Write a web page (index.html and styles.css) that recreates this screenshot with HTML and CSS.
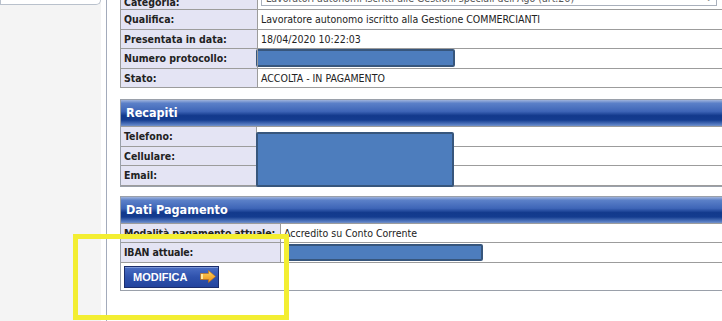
FILE: index.html
```html
<!DOCTYPE html>
<html lang="it">
  <head>
    <meta charset="UTF-8" />
    <meta name="viewport" content="width=device-width, initial-scale=1.0" />
    <title>Dettaglio domanda</title>
    <link rel="stylesheet" href="styles.css">
  </head>
  <body>
    <div class="page">
      <aside class="sidebar">
        <div class="side-box"></div>
      </aside>

      <main class="content">
        <table class="grid details">
          <tr class="select-row">
            <th>Categoria:</th>
            <td>
              <div class="select">
                <span>Lavoratori autonomi iscritti alle Gestioni speciali dell'Ago (art.26)</span>
                <span class="caret">&#8964;</span>
              </div>
            </td>
          </tr>
          <tr>
            <th>Qualifica:</th>
            <td>Lavoratore autonomo iscritto alla Gestione COMMERCIANTI</td>
          </tr>
          <tr>
            <th>Presentata in data:</th>
            <td>18/04/2020 10:22:03</td>
          </tr>
          <tr>
            <th>Numero protocollo:</th>
            <td><span class="redact redact-protocol"></span></td>
          </tr>
          <tr>
            <th>Stato:</th>
            <td>ACCOLTA - IN PAGAMENTO</td>
          </tr>
        </table>

        <section class="panel">
          <h2 class="panel-title">Recapiti</h2>
          <table class="grid contacts">
            <tr>
              <th>Telefono:</th>
              <td></td>
            </tr>
            <tr>
              <th>Cellulare:</th>
              <td></td>
            </tr>
            <tr>
              <th>Email:</th>
              <td></td>
            </tr>
          </table>
          <div class="redact redact-contacts"></div>
        </section>

        <section class="panel">
          <h2 class="panel-title">Dati Pagamento</h2>
          <table class="grid payment">
            <tr>
              <th>Modalità pagamento attuale:</th>
              <td>Accredito su Conto Corrente</td>
            </tr>
            <tr>
              <th>IBAN attuale:</th>
              <td><span class="redact redact-iban"></span></td>
            </tr>
          </table>
          <div class="actions">
            <button class="btn" type="button">
              MODIFICA
              <svg class="btn-arrow" width="16" height="13" viewBox="0 0 16 13">
                <defs>
                  <linearGradient id="arrowFill" x1="0" y1="0" x2="0" y2="1">
                    <stop offset="0" stop-color="#ffd860" />
                    <stop offset="1" stop-color="#ec8c14" />
                  </linearGradient>
                </defs>
                <path d="M0.5 3.5h8V0.5l7 6-7 6V9.5h-8z" fill="url(#arrowFill)" stroke="#c8700c" stroke-width="0.6" />
                <rect x="1" y="4" width="2" height="5" fill="#ffe9a0" />
              </svg>
            </button>
          </div>
        </section>
      </main>

      <div class="highlight"></div>
    </div>
  </body>
</html>
```

FILE: styles.css
```css
body {
  margin: 0;
  background-color: #ffffff;
  font-family: "DejaVu Sans Condensed", "DejaVu Sans", sans-serif;
  font-stretch: condensed;
  font-size: 10.5px;
  color: #222;
  overflow: hidden;
}
.page {
  position: relative;
  display: flex;
  height: 321px;
}
.sidebar {
  width: 101px;
  flex-shrink: 0;
  background-color: #f4f4f4;
}
.side-box {
  height: 4px;
  background-color: #ffffff;
  border: 1px solid #b9c1cc;
  border-top: none;
  border-radius: 0 0 5px 0;
}
.content {
  flex: 1;
  min-width: 0;
  margin-left: 5px;
  padding-left: 13px;
  border-left: 1px solid #a3abbb;
  overflow: hidden;
}
.grid {
  width: 660px;
  border-collapse: collapse;
}
.grid th,
.grid td {
  height: 18.5px;
  padding: 0 3px;
  line-height: 18.5px;
  text-align: left;
  white-space: nowrap;
  border-top: 1px solid #9c9c9c;
  border-bottom: 1px solid #9c9c9c;
}
.grid th {
  font-weight: bold;
  background-color: #e4e4f4;
  border-left: 1px solid #9c9c9c;
  border-right: 1px solid #9c9c9c;
}
.details {
  margin-top: -17px;
}
.details th {
  width: 130px;
}
.select-row th {
  vertical-align: bottom;
  line-height: 14px;
}
.select {
  display: flex;
  justify-content: space-between;
  align-items: flex-end;
  width: 446px;
  height: 18px;
  margin: 2px 0 3px;
  padding: 0 4px;
  border: 1px solid #a9b0bc;
  background-color: #ffffff;
  color: #555;
  line-height: 14px;
}
.caret {
  color: #888;
  font-size: 9px;
}
.redact {
  display: block;
  background-color: #4d7dbd;
  border: 2px solid #37567c;
  border-radius: 2px;
  box-sizing: border-box;
}
.redact-protocol {
  width: 199px;
  height: 18px;
  margin-left: -5px;
}
.panel {
  position: relative;
  width: 660px;
  margin-top: 11px;
  border: 1px solid #9aa0aa;
}
.panel + .panel {
  margin-top: 9px;
}
.panel-title {
  margin: 0;
  height: 27px;
  padding-left: 5px;
  line-height: 26px;
  font-size: 12.5px;
  font-weight: bold;
  color: #ffffff;
  background: linear-gradient(
    to bottom,
    #9fb3dc 0%,
    #5b80c8 12%,
    #3e65b7 42%,
    #12398c 58%,
    #143c8f 74%,
    #5a7fc4 92%,
    #8fa3c8 100%
  );
}
.panel .grid {
  width: 100%;
  margin-top: -1px;
}
.panel .grid th {
  border-left: none;
}
.contacts th {
  width: 129px;
}
.payment th {
  width: 153px;
  letter-spacing: -0.15px;
}
.redact-contacts {
  position: absolute;
  left: 135px;
  top: 32px;
  width: 198px;
  height: 55px;
}
.redact-iban {
  width: 199px;
  height: 17px;
  margin-left: 0;
}
.actions {
  padding: 3px 3px 2px;
}
.btn {
  display: flex;
  align-items: center;
  width: 95px;
  height: 22px;
  padding: 0 0 0 8px;
  border: 1px solid #1b2d6c;
  box-shadow: inset 0 1px 0 #7d98d8;
  background: linear-gradient(to bottom, #4b6ec4 0%, #2f52ad 50%, #23449e 100%);
  font-family: "Liberation Sans", Arial, sans-serif;
  font-size: 11px;
  font-weight: bold;
  color: #ffffff;
  cursor: pointer;
}
.btn-arrow {
  margin-left: 13px;
}
.highlight {
  position: absolute;
  left: 73px;
  top: 234px;
  width: 216px;
  height: 86px;
  box-sizing: border-box;
  border: 5px solid #f3ee32;
  pointer-events: none;
}
```
